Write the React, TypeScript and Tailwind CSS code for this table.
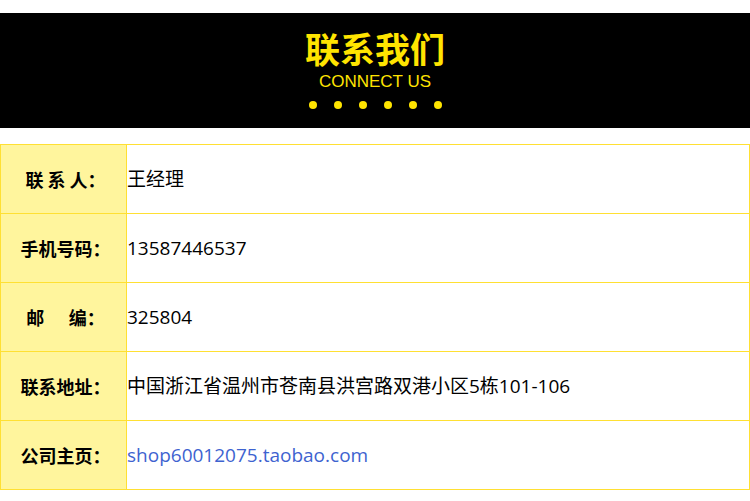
import React from 'react';

interface Row {
  label: string;
  value: string;
  link?: boolean;
}

const rows: Row[] = [
  { label: '联\u00a0系\u00a0人：', value: '王经理' },
  { label: '手机号码：', value: '13587446537' },
  { label: '邮\u00a0\u00a0\u00a0\u00a0\u00a0\u00a0编：', value: '325804' },
  { label: '联系地址：', value: '中国浙江省温州市苍南县洪宫路双港小区5栋101-106' },
  { label: '公司主页：', value: 'shop60012075.taobao.com', link: true },
];

const cjk = "font-['Noto_Sans_CJK_SC',sans-serif]";
const mixed = "font-['Open_Sans','Noto_Sans_CJK_SC',sans-serif]";

const App: React.FC = () => {
  return (
    <div className="w-[750px] h-[501px] bg-white pt-[13px]">
      {/* Header band */}
      <div className="h-[115px] bg-black flex flex-col items-center">
        <h1 className={`${cjk} mt-[17px] text-[35px] leading-[36px] font-bold text-[#ffe400]`}>联系我们</h1>
        <div className="font-['Liberation_Sans',sans-serif] text-[17px] leading-[20px] text-[#ffe400] mt-[6px]">
          CONNECT US
        </div>
        <div className="flex gap-[17px] mt-[9px]">
          {[0, 1, 2, 3, 4, 5].map((i) => (
            <span key={i} className="w-[8px] h-[8px] rounded-full bg-[#ffe400]" />
          ))}
        </div>
      </div>

      {/* Info table */}
      <div className={`${mixed} mt-[16px] border-t border-x border-[#ffe033]`}>
        {rows.map((r) => (
          <div key={r.label} className="flex h-[69px] border-b border-[#ffe033]">
            <div className={`${cjk} w-[126px] pl-[4px] bg-[#fff59d] border-r border-[#ffe033] flex items-center justify-center text-[18px] font-bold text-black whitespace-pre`}>
              {r.label}
            </div>
            <div
              className={`flex-1 flex items-center text-[19px] ${r.link ? 'text-[#3e63d0]' : 'text-black'}`}
            >
              {r.value}
            </div>
          </div>
        ))}
      </div>
    </div>
  );
};

export default App;
